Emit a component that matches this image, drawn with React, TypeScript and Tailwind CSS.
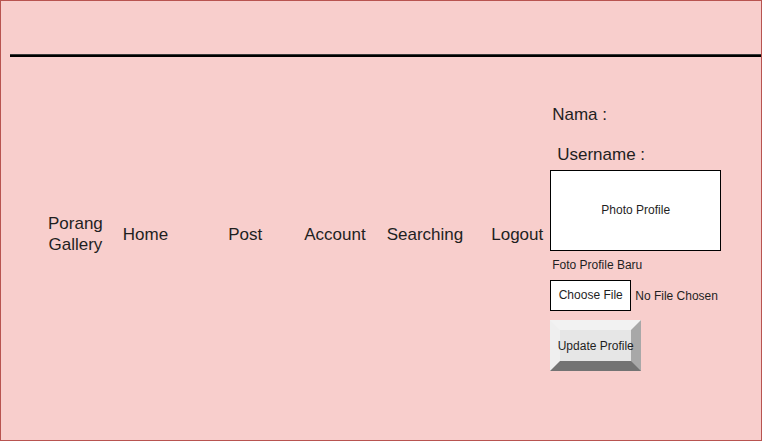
export default function App() {
  const font = { fontFamily: '"Liberation Sans", Arial, Helvetica, sans-serif' };

  return (
    <div
      className="w-[762px] h-[441px] bg-[#f8cecc] border border-[#b85450] text-[#1f1f1f] overflow-hidden flex flex-col"
      style={font}
    >
      {/* top bar area + rule */}
      <div className="h-[53px]" />
      <div className="ml-[9px] h-[3px] bg-[#3a3a3a] flex flex-col justify-center">
        <div className="h-[2px] bg-black" />
      </div>

      <div className="flex items-start">
        {/* navigation */}
        <nav className="mt-[156px] ml-[47px] flex items-center text-[17px] leading-[21px]">
          <div className="text-center">
            Porang
            <br />
            Gallery
          </div>
          <a className="ml-[20px]">Home</a>
          <a className="ml-[60px]">Post</a>
          <a className="ml-[42px]">Account</a>
          <a className="ml-[21px]">Searching</a>
          <a className="ml-[28px]">Logout</a>
        </nav>

        {/* profile panel */}
        <div className="ml-[7px] mt-[48px] flex flex-col">
          <p className="ml-[2px] text-[17px] leading-[20px]">Nama :</p>
          <p className="ml-[7px] mt-[20px] text-[17px] leading-[20px]">Username :</p>
          <div className="mt-[5px] w-[171px] h-[81px] bg-white border border-black flex items-center justify-center text-[12px] pb-[1px]">
            Photo Profile
          </div>
          <p className="ml-[2px] mt-[6px] text-[12px] leading-[16px]">Foto Profile Baru</p>
          <div className="mt-[7px] flex items-center">
            <div className="w-[81px] h-[31px] bg-white border border-black flex items-center justify-center text-[12px] pb-[1px]">
              Choose File
            </div>
            <span className="ml-[4px] text-[12px]">No File Chosen</span>
          </div>
          <button className="mt-[9px] w-[91px] h-[51px] bg-[#e6e6e6] border-[10px] border-t-[#f2f2f2] border-l-[#efefef] border-r-[#a8a8a8] border-b-[#737373] flex items-center justify-center text-[12px] whitespace-nowrap">
            Update Profile
          </button>
        </div>
      </div>
    </div>
  );
}
